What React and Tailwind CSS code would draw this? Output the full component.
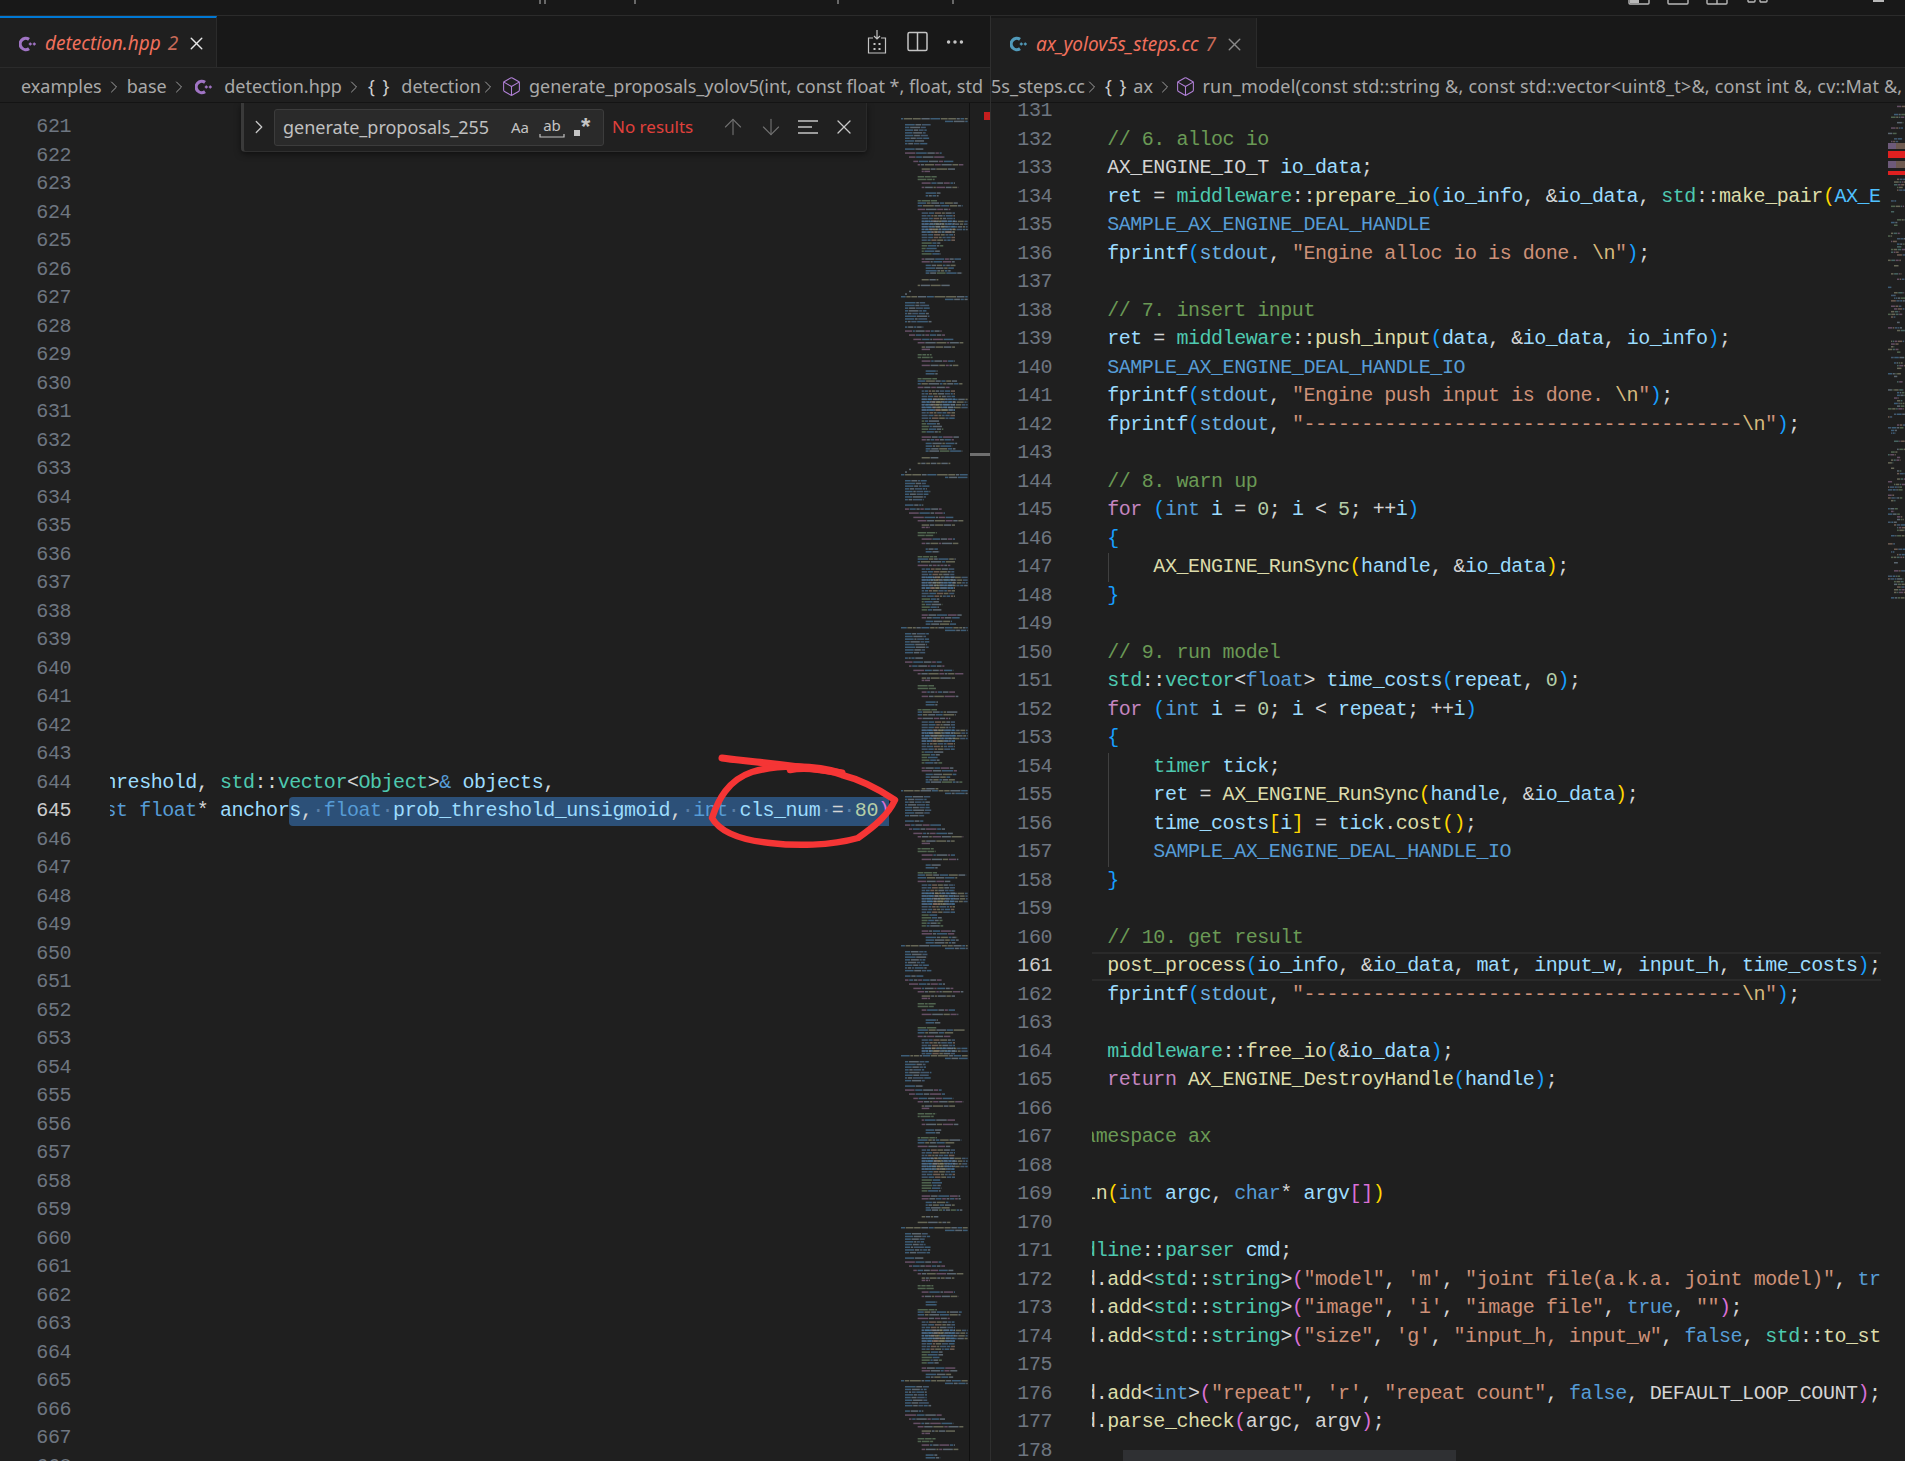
import React from "react";
import { ArrowDown, ArrowUp, Box, ChevronRight, Ellipsis, X } from "lucide-react";

const UI_FONT = "font-['Noto_Sans',sans-serif]";
const CODE_FONT = "font-['Liberation_Mono',monospace] text-[20px] tracking-[-0.46px] leading-[28.5px]";

const TOK = {
  c: "text-[#6a9955]",
  k: "text-[#569cd6]",
  p: "text-[#c586c0]",
  v: "text-[#9cdcfe]",
  f: "text-[#dcdcaa]",
  s: "text-[#ce9178]",
  e: "text-[#d7ba7d]",
  n: "text-[#b5cea8]",
  t: "text-[#4ec9b0]",
  w: "text-[#d4d4d4]",
  o: "text-[#6cb0e0]",
  x: "text-[#4fc1ff]",
  a: "text-[#ffd700]",
  b: "text-[#da70d6]",
  d: "text-[#179fff]",
  h: "text-[#5a7ea6]",
};

const dashes = "--------------------------------------";

const fprintfLine = (text) => [
  ["w", "    "], ["v", "fprintf"], ["d", "("], ["o", "stdout"], ["w", ", "], ["s", `"${text} `], ["e", "\\n"], ["s", '"'], ["d", ")"], ["w", ";"],
];
const dashLine = [
  ["w", "    "], ["v", "fprintf"], ["d", "("], ["o", "stdout"], ["w", ", "], ["s", `"${dashes}`], ["e", "\\n"], ["s", '"'], ["d", ")"], ["w", ";"],
];
const cmdAdd = (rest) => [["w", "  "], ["w", "d."], ["f", "add"], ["w", "<"], ...rest];

const rightLines = [
  [131, []],
  [132, [["c", "    // 6. alloc io"]]],
  [133, [["w", "    AX_ENGINE_IO_T "], ["v", "io_data"], ["w", ";"]]],
  [134, [["v", "    ret"], ["w", " = "], ["t", "middleware"], ["w", "::"], ["f", "prepare_io"], ["d", "("], ["v", "io_info"], ["w", ", &"], ["v", "io_data"], ["w", ", "], ["t", "std"], ["w", "::"], ["f", "make_pair"], ["a", "("], ["x", "AX_ENGINE_HDR"]]],
  [135, [["k", "    SAMPLE_AX_ENGINE_DEAL_HANDLE"]]],
  [136, fprintfLine("Engine alloc io is done.")],
  [137, []],
  [138, [["c", "    // 7. insert input"]]],
  [139, [["v", "    ret"], ["w", " = "], ["t", "middleware"], ["w", "::"], ["f", "push_input"], ["d", "("], ["v", "data"], ["w", ", &"], ["v", "io_data"], ["w", ", "], ["v", "io_info"], ["d", ")"], ["w", ";"]]],
  [140, [["k", "    SAMPLE_AX_ENGINE_DEAL_HANDLE_IO"]]],
  [141, fprintfLine("Engine push input is done.")],
  [142, dashLine],
  [143, []],
  [144, [["c", "    // 8. warn up"]]],
  [145, [["p", "    for"], ["w", " "], ["d", "("], ["k", "int"], ["w", " "], ["v", "i"], ["w", " = "], ["n", "0"], ["w", "; "], ["v", "i"], ["w", " < "], ["n", "5"], ["w", "; ++"], ["v", "i"], ["d", ")"]]],
  [146, [["w", "    "], ["d", "{"]]],
  [147, [["f", "        AX_ENGINE_RunSync"], ["a", "("], ["v", "handle"], ["w", ", &"], ["v", "io_data"], ["a", ")"], ["w", ";"]], true],
  [148, [["w", "    "], ["d", "}"]]],
  [149, []],
  [150, [["c", "    // 9. run model"]]],
  [151, [["t", "    std"], ["w", "::"], ["t", "vector"], ["w", "<"], ["k", "float"], ["w", "> "], ["v", "time_costs"], ["d", "("], ["v", "repeat"], ["w", ", "], ["n", "0"], ["d", ")"], ["w", ";"]]],
  [152, [["p", "    for"], ["w", " "], ["d", "("], ["k", "int"], ["w", " "], ["v", "i"], ["w", " = "], ["n", "0"], ["w", "; "], ["v", "i"], ["w", " < "], ["v", "repeat"], ["w", "; ++"], ["v", "i"], ["d", ")"]]],
  [153, [["w", "    "], ["d", "{"]]],
  [154, [["t", "        timer"], ["w", " "], ["v", "tick"], ["w", ";"]], true],
  [155, [["v", "        ret"], ["w", " = "], ["f", "AX_ENGINE_RunSync"], ["a", "("], ["v", "handle"], ["w", ", &"], ["v", "io_data"], ["a", ")"], ["w", ";"]], true],
  [156, [["v", "        time_costs"], ["a", "["], ["v", "i"], ["a", "]"], ["w", " = "], ["v", "tick"], ["w", "."], ["f", "cost"], ["a", "()"], ["w", ";"]], true],
  [157, [["k", "        SAMPLE_AX_ENGINE_DEAL_HANDLE_IO"]], true],
  [158, [["w", "    "], ["d", "}"]]],
  [159, []],
  [160, [["c", "    // 10. get result"]]],
  [161, [["f", "    post_process"], ["d", "("], ["v", "io_info"], ["w", ", &"], ["v", "io_data"], ["w", ", "], ["v", "mat"], ["w", ", "], ["v", "input_w"], ["w", ", "], ["v", "input_h"], ["w", ", "], ["v", "time_costs"], ["d", ")"], ["w", ";"]]],
  [162, dashLine],
  [163, []],
  [164, [["t", "    middleware"], ["w", "::"], ["f", "free_io"], ["d", "("], ["w", "&"], ["v", "io_data"], ["d", ")"], ["w", ";"]]],
  [165, [["p", "    return"], ["w", " "], ["f", "AX_ENGINE_DestroyHandle"], ["d", "("], ["v", "handle"], ["d", ")"], ["w", ";"]]],
  [166, []],
  [167, [["c", " namespace ax"]]],
  [168, []],
  [169, [["f", "main"], ["a", "("], ["k", "int"], ["w", " "], ["v", "argc"], ["w", ", "], ["k", "char"], ["w", "* "], ["v", "argv"], ["b", "[]"], ["a", ")"]]],
  [170, []],
  [171, [["t", "cmdline"], ["w", "::"], ["t", "parser"], ["w", " "], ["v", "cmd"], ["w", ";"]]],
  [172, cmdAdd([["t", "std"], ["w", "::"], ["t", "string"], ["w", ">"], ["b", "("], ["s", '"model"'], ["w", ", "], ["s", "'m'"], ["w", ", "], ["s", '"joint file(a.k.a. joint model)"'], ["w", ", "], ["k", "true"], ["w", ', ""'], ["b", ")"]])],
  [173, cmdAdd([["t", "std"], ["w", "::"], ["t", "string"], ["w", ">"], ["b", "("], ["s", '"image"'], ["w", ", "], ["s", "'i'"], ["w", ", "], ["s", '"image file"'], ["w", ", "], ["k", "true"], ["w", ", "], ["s", '""'], ["b", ")"], ["w", ";"]])],
  [174, cmdAdd([["t", "std"], ["w", "::"], ["t", "string"], ["w", ">"], ["b", "("], ["s", '"size"'], ["w", ", "], ["s", "'g'"], ["w", ", "], ["s", '"input_h, input_w"'], ["w", ", "], ["k", "false"], ["w", ", "], ["t", "std"], ["w", "::"], ["f", "to_string"], ["b", "("]])],
  [175, []],
  [176, cmdAdd([["k", "int"], ["w", ">"], ["b", "("], ["s", '"repeat"'], ["w", ", "], ["s", "'r'"], ["w", ", "], ["s", '"repeat count"'], ["w", ", "], ["k", "false"], ["w", ", DEFAULT_LOOP_COUNT"], ["b", ")"], ["w", ";"]])],
  [177, [["w", "  d."], ["f", "parse_check"], ["b", "("], ["w", "argc, argv"], ["b", ")"], ["w", ";"]]],
  [178, []],
];

const leftCode = {
  644: [["v", "hreshold"], ["w", ", "], ["t", "std"], ["w", "::"], ["t", "vector"], ["w", "<"], ["t", "Object"], ["w", ">"], ["k", "&"], ["w", " "], ["v", "objects"], ["w", ","]],
  645: [["k", "st"], ["w", " "], ["k", "float"], ["w", "* "], ["v", "anchors"], ["w", ","], ["h", "·"], ["k", "float"], ["h", "·"], ["v", "prob_threshold_unsigmoid"], ["w", ","], ["h", "·"], ["k", "int"], ["h", "·"], ["v", "cls_num"], ["h", "·"], ["w", "="], ["h", "·"], ["n", "80"], ["b", ")"]],
};

const leftNumbers = Array.from({ length: 48 }, (_, i) => 621 + i);

const Code = ({ tokens }) => (
  <>
    {tokens.map(([kind, text], i) => (
      <span key={i} className={TOK[kind]}>{text}</span>
    ))}
  </>
);

const CppIcon = ({ color }) => (
  <svg width="18" height="18" viewBox="0 0 18 18" fill="none" className="shrink-0" style={{ color }}>
    <path d="M10 4.4A5.6 5.6 0 1 0 10 13.6" stroke="currentColor" strokeWidth="3.2" />
    <path d="M9.8 9h3M11.3 7.5v3M13.8 9h3M15.3 7.5v3" stroke="currentColor" strokeWidth="1.3" />
  </svg>
);

const Sep = ({ className = "" }) => <ChevronRight size={20} strokeWidth={1.2} className={`shrink-0 text-[#a0a0a0] ${className}`} />;

const Crumb = ({ children, className = "" }) => <span className={`shrink-0 whitespace-pre ${className}`}>{children}</span>;

const Tab = ({ icon, name, count, closeColor }) => (
  <div className="flex h-full items-center bg-[#1f1f1f] pt-[2px]">
    <div className="ml-[19px]">{icon}</div>
    <span className="ml-[8px] whitespace-pre text-[19px] italic text-[#f0705c]">{name}</span>
    <span className="ml-[7px] text-[19px] italic text-[#c76a58]">{count}</span>
    <X size={21} strokeWidth={1.6} className={`ml-[8px] ${closeColor}`} />
  </div>
);

const FindWidget = () => (
  <div className="absolute left-[241px] top-0 z-10 flex h-[49px] w-[626px] items-center rounded-b-[4px] border-b border-l-[3px] border-r border-[#3a3a3a] border-r-[#2a2a2a] border-b-[#2f2f2f] bg-[#202020] shadow-[0_2px_6px_rgba(0,0,0,0.5)]">
    <ChevronRight size={22} strokeWidth={1.4} className="ml-[4px] text-[#c8c8c8]" />
    <div className="ml-[4px] flex h-[37px] w-[330px] items-center rounded-[3px] border border-[#3c3c3c] bg-[#2a2a2a] pl-[8px] text-[18px] text-[#c0c0c0]">
      <span className="w-[228px]">generate_proposals_255</span>
      <span className="text-[15px] text-[#c4c4c4]">Aa</span>
      <span className="ml-[10px] flex w-[26px] flex-col items-center text-[15px] leading-[17px] text-[#c4c4c4]">
        ab
        <svg width="26" height="4" viewBox="0 0 26 4" fill="none" stroke="currentColor" strokeWidth="1.2">
          <path d="M1 0v3h24V0" />
        </svg>
      </span>
      <span className="ml-[9px] mt-[11px] h-[6px] w-[6px] bg-[#c4c4c4]" />
      <span className="ml-[1px] font-['Liberation_Sans',sans-serif] text-[24px] font-bold leading-[24px] text-[#c4c4c4]">*</span>
    </div>
    <span className="ml-[8px] w-[94px] text-[17px] text-[#e0403c]">No results</span>
    <ArrowUp size={26} strokeWidth={1.05} className="ml-[14px] text-[#717171]" />
    <ArrowDown size={26} strokeWidth={1.05} className="ml-[12px] text-[#717171]" />
    <svg width="22" height="18" viewBox="0 0 22 18" className="ml-[13px] text-[#c4c4c4]" fill="none" stroke="currentColor" strokeWidth="1.6">
      <path d="M1 3h20M1 9h14M1 15h20" />
    </svg>
    <X size={24} strokeWidth={1.3} className="ml-[13px] text-[#c8c8c8]" />
  </div>
);

// small seeded random so the minimaps stay the same between runs
const seeded = (seed) => {
  let s = seed;
  return () => {
    s = (s * 16807) % 2147483647;
    return s / 2147483647;
  };
};

const PALETTE = ["#56789a", "#4f7fa8", "#7d8f9e", "#6c8a6a", "#8d8f74", "#5d8a86", "#8c6a8c", "#9a8070"];

const BLOCKS = [
  { y: 52, x: 18, w: 200, rows: 1, pal: [1, 4, 4, 2] },
  { y: 60, x: 150, w: 68, rows: 1, pal: [1, 2] },
  { y: 70, x: 30, w: 80, rows: 8, pal: [1, 2, 0] },
  { y: 143, x: 30, w: 55, rows: 1, pal: [1, 2] },
  { y: 155, x: 30, w: 110, rows: 1, pal: [6, 1, 2] },
  { y: 167, x: 42, w: 108, rows: 1, pal: [6, 1, 2] },
  { y: 180, x: 55, w: 120, rows: 1, pal: [6, 1, 2] },
  { y: 190, x: 68, w: 137, rows: 1, pal: [6, 2, 4] },
  { y: 203, x: 80, w: 100, rows: 1, pal: [4, 2] },
  { y: 210, x: 80, w: 25, rows: 1, pal: [6] },
  { y: 226, x: 68, w: 58, rows: 2, pal: [3] },
  { y: 245, x: 80, w: 100, rows: 1, pal: [6, 1, 2] },
  { y: 258, x: 80, w: 110, rows: 1, pal: [6, 2, 4] },
  { y: 275, x: 92, w: 48, rows: 2, pal: [1, 2] },
  { y: 298, x: 68, w: 58, rows: 1, pal: [3] },
  { y: 305, x: 68, w: 150, rows: 2, pal: [1, 4, 2] },
  { y: 324, x: 68, w: 98, rows: 1, pal: [6, 2] },
  { y: 335, x: 80, w: 100, rows: 8, pal: [0, 1, 7, 4, 2], dense: true },
  { y: 360, x: 80, w: 138, rows: 4, pal: [0, 1, 2, 4], dense: true },
  { y: 392, x: 80, w: 100, rows: 4, pal: [0, 1, 7, 4], dense: true },
  { y: 425, x: 80, w: 65, rows: 5, pal: [3, 1, 2] },
  { y: 473, x: 80, w: 125, rows: 2, pal: [6, 2, 1] },
  { y: 492, x: 92, w: 100, rows: 3, pal: [1, 2, 4] },
  { y: 515, x: 92, w: 110, rows: 1, pal: [1, 2, 3] },
  { y: 535, x: 80, w: 50, rows: 1, pal: [4, 2] },
  { y: 552, x: 68, w: 98, rows: 1, pal: [4, 2] },
  { y: 570, x: 42, w: 6, rows: 1, pal: [2] },
  { y: 578, x: 30, w: 6, rows: 1, pal: [2] },
];

const buildLeftMinimap = () => {
  const rnd = seeded(4711);
  const starts = [118, 296, 474, 627, 790, 945, 1055, 1227, 1380];
  const rects = [];
  starts.forEach((start, n) => {
    const limit = (starts[n + 1] || 1480) - start;
    BLOCKS.forEach((b) => {
      for (let r = 0; r < b.rows; r++) {
        const top = (b.y - 52) / 3 + r * 2.7;
        if (top + 2 > limit) continue;
        const total = (b.w / 3) * (b.rows > 1 && !b.dense ? 0.7 + rnd() * 0.3 : 1);
        let x = b.x / 3 - 5;
        let used = 0;
        let i = 0;
        while (used < total) {
          const w = Math.min(b.dense ? 2 + rnd() * 5 : 2 + rnd() * 9, total - used);
          rects.push(<rect key={rects.length} x={x} y={start - 103 + top} width={w} height="1.5" fill={PALETTE[b.pal[i % b.pal.length]]} opacity="0.65" />);
          x += w + 0.7;
          used += w + 0.7;
          i++;
        }
      }
    });
  });
  return rects;
};

const buildRightMinimap = () => {
  const rnd = seeded(9133);
  const rects = [];
  for (let y = 0; y < 499; y += 2.7) {
    if (rnd() < 0.3) continue;
    if (y > 38 && y < 75) continue;
    const indent = Math.floor(rnd() * 4) * 3;
    let x = indent;
    const end = Math.min(17, indent + 3 + rnd() * 14);
    let i = Math.floor(rnd() * 8);
    while (x < end) {
      const w = Math.min(1 + rnd() * 4, end - x);
      rects.push(<rect key={rects.length} x={x} y={y} width={w} height="1.5" fill={PALETTE[i % 8]} opacity="0.65" />);
      x += w + 0.6;
      i++;
    }
  }
  return rects;
};

const leftMinimap = buildLeftMinimap();
const rightMinimap = buildRightMinimap();

const App = () => {
  return (
    <div className={`relative flex h-[1461px] w-[1905px] flex-col overflow-hidden bg-[#181818] ${UI_FONT}`}>
      {/* cut off title bar */}
      <div className="h-[16px] shrink-0 border-b border-[#2b2b2b] bg-[#181818]">
        <svg width="1905" height="15" viewBox="0 0 1905 15" fill="none" stroke="#b8b8b8" strokeWidth="1.4">
          <path d="M540 0v4M545 0v4M635 0v4M838 0v4M953 0v4" strokeWidth="1" />
          <path d="M1629 0v3a1 1 0 0 0 1 1h18a1 1 0 0 0 1-1V0" />
          <rect x="1630" y="0" width="9" height="3" fill="#b8b8b8" stroke="none" />
          <path d="M1668 0v3a1 1 0 0 0 1 1h18a1 1 0 0 0 1-1V0" />
          <path d="M1707 0v3a1 1 0 0 0 1 1h18a1 1 0 0 0 1-1V0M1717 0v4" />
          <path d="M1748 0v1a1 1 0 0 0 1 1h5a1 1 0 0 0 1-1V0M1760 0v1a1 1 0 0 0 1 1h5a1 1 0 0 0 1-1V0" />
          <path d="M1873 1h11" strokeWidth="2" />
        </svg>
      </div>

      <div className="flex min-h-0 flex-1">
        {/* left group */}
        <div className="flex w-[990px] shrink-0 flex-col">
          <div className="flex h-[52px] shrink-0 border-b border-[#2b2b2b] bg-[#181818]">
            <div className="h-full w-[217px] border-t-2 border-r border-t-[#0078d4] border-r-[#2b2b2b]">
              <Tab icon={<CppIcon color="#a074c4" />} name="detection.hpp" count="2" closeColor="text-[#e8e8e8]" />
            </div>
            <div className="flex flex-1 items-center justify-end pr-[24px] text-[#c4c4c4]">
              <svg width="22" height="26" viewBox="0 0 22 26" fill="none" stroke="currentColor" strokeWidth="1.2" className="mr-[19px]">
                <path d="M11 1v9M8 7l3 3 3-3M7 9H2.5v15h17V9H15" />
                <path d="M7.5 14h2v2h-2zM12.5 14h2v2h-2zM7.5 19h2v2h-2zM12.5 19h2v2h-2z" fill="currentColor" stroke="none" />
              </svg>
              <svg width="21" height="21" viewBox="0 0 21 21" fill="none" stroke="currentColor" strokeWidth="1.5" className="mr-[16px]">
                <rect x="1" y="1.5" width="19" height="18" rx="1.5" />
                <path d="M10.5 1.5v18" />
              </svg>
              <Ellipsis size={22} strokeWidth={1.8} />
            </div>
          </div>

          <div className="flex h-[34px] shrink-0 items-center gap-[2.5px] overflow-hidden bg-[#1f1f1f] pl-[21px] pt-[3px] text-[18px] text-[#a9a9a9]">
            <Crumb>examples</Crumb>
            <Sep />
            <Crumb>base</Crumb>
            <Sep />
            <div className="ml-[3px]"><CppIcon color="#a074c4" /></div>
            <Crumb className="ml-[9px]">detection.hpp</Crumb>
            <Sep />
            <Crumb className="ml-[1px] tracking-[1.5px] text-[#cfcfcf]">{"{ }"}</Crumb>
            <Crumb className="ml-[8px]">detection</Crumb>
            <Sep className="ml-[-5.5px]" />
            <Box size={21} strokeWidth={1.2} className="shrink-0 text-[#b180d7]" />
            <Crumb className="ml-[5px]">generate_proposals_yolov5(int, const float *, float, std</Crumb>
          </div>

          <div className="relative flex min-h-0 flex-1 overflow-hidden border-t border-[#141414] bg-[#1f1f1f]">
            <FindWidget />
            <div className={`w-[900px] shrink-0 pt-[10px] ${CODE_FONT}`}>
              {leftNumbers.map((n) => (
                <div key={n} className="flex h-[28.5px]">
                  <div className={`w-[71px] shrink-0 text-right ${n === 645 ? "text-[#cccccc]" : "text-[#6e7681]"}`}>{n}</div>
                  <div className="w-[39px] shrink-0" />
                  <div className="relative w-[779px] shrink-0 overflow-hidden">
                    {n === 645 && <div className="absolute bottom-0 left-[179px] top-0 w-[600px] rounded-l-[4px] bg-[#2c5078]" />}
                    <pre className={`relative ml-[-5.5px] ${CODE_FONT}`}>
                      {leftCode[n] && <Code tokens={leftCode[n]} />}
                    </pre>
                  </div>
                </div>
              ))}
            </div>
            <svg width="69" height="1358" className="shrink-0">{leftMinimap}</svg>
            <div className="relative w-[21px] shrink-0 border-l border-[#101010]">
              <div className="absolute right-0 top-[9px] h-[8px] w-[6px] bg-[#c41e1e]" />
              <div className="absolute left-0 right-0 top-[350px] h-[3px] bg-[#6f6f6f]" />
            </div>
          </div>
        </div>

        {/* right group */}
        <div className="flex min-w-0 flex-1 flex-col border-l border-[#2f2f2f]">
          <div className="flex h-[52px] shrink-0 border-b border-[#2b2b2b] bg-[#181818]">
            <div className="mt-[2px] h-[50px] w-[266px] border-r border-[#2b2b2b]">
              <Tab icon={<CppIcon color="#519aba" />} name="ax_yolov5s_steps.cc" count="7" closeColor="text-[#8a8a8a]" />
            </div>
          </div>

          <div className="flex h-[34px] shrink-0 items-center gap-[2.5px] overflow-hidden bg-[#1f1f1f] pt-[3px] text-[18px] text-[#a9a9a9]">
            <Crumb className="text-[#a9a9a9]">5s_steps.cc</Crumb>
            <Sep className="ml-[-5px]" />
            <Crumb className="tracking-[1.5px] text-[#cfcfcf]">{"{ }"}</Crumb>
            <Crumb className="ml-[3px]">ax</Crumb>
            <Sep />
            <Box size={21} strokeWidth={1.2} className="ml-[-3px] shrink-0 text-[#b180d7]" />
            <Crumb className="ml-[4px] tracking-[0.2px]">{"run_model(const std::string &, const std::vector<uint8_t>&, const int &, cv::Mat &, int, int, int)"}</Crumb>
          </div>

          <div className="relative flex min-h-0 flex-1 overflow-hidden border-t border-[#141414] bg-[#1f1f1f]">
            <div className={`mt-[-6px] w-[890px] shrink-0 ${CODE_FONT}`}>
              {rightLines.map(([n, tokens, guide]) => (
                <div key={n} className="flex h-[28.5px]">
                  <div className={`w-[61px] shrink-0 text-right ${n === 161 ? "text-[#cccccc]" : "text-[#6e7681]"}`}>{n}</div>
                  <div className="w-[40px] shrink-0" />
                  <div className={`relative w-[789px] shrink-0 overflow-hidden ${n === 161 ? "border-y-2 border-[#2a2a2a]" : ""}`}>
                    {guide && <div className="absolute bottom-0 left-[16px] top-0 w-px bg-[#404040]" />}
                    <pre className={`ml-[-31px] font-['Liberation_Mono',monospace] text-[20px] tracking-[-0.46px] ${n === 161 ? "leading-[23.5px]" : "leading-[28.5px]"}`}>
                      <Code tokens={tokens} />
                    </pre>
                  </div>
                </div>
              ))}
            </div>
            <div className="min-w-0 flex-1 pl-[7px]">
              <svg width="17" height="500" className="block">
                {rightMinimap}
                <rect x="0" y="40" width="8" height="6" fill="#6d5a7a" />
                <rect x="8" y="40" width="9" height="6" fill="#6e5a50" />
                <rect x="0" y="48" width="17" height="7" fill="#e02020" />
                <rect x="0" y="58" width="8" height="7" fill="#6d5a7a" />
                <rect x="8" y="58" width="9" height="7" fill="#6e5a50" />
                <rect x="0" y="68" width="17" height="4" fill="#e02020" />
              </svg>
            </div>
            {/* horizontal scrollbar */}
            <div className="absolute bottom-0 left-[132px] h-[11px] w-[333px] bg-[#2f3033]" />
          </div>
        </div>
      </div>

      {/* red pen annotation */}
      <svg className="pointer-events-none absolute inset-0" width="1905" height="1461" viewBox="0 0 1905 1461" fill="none" stroke="#f53535" strokeWidth="6.5" strokeLinecap="round" strokeLinejoin="round">
        <path d="M722 758C750 762 785 764 842 773" strokeWidth="7" />
        <path d="M842 773C815 765 780 764 752 772C728 780 718 800 712 818C720 832 740 840 770 843C795 846 830 846 858 838C875 826 888 815 895 800C880 790 862 780 842 775C822 768 800 768 790 770" />
      </svg>
    </div>
  );
};

export default App;
